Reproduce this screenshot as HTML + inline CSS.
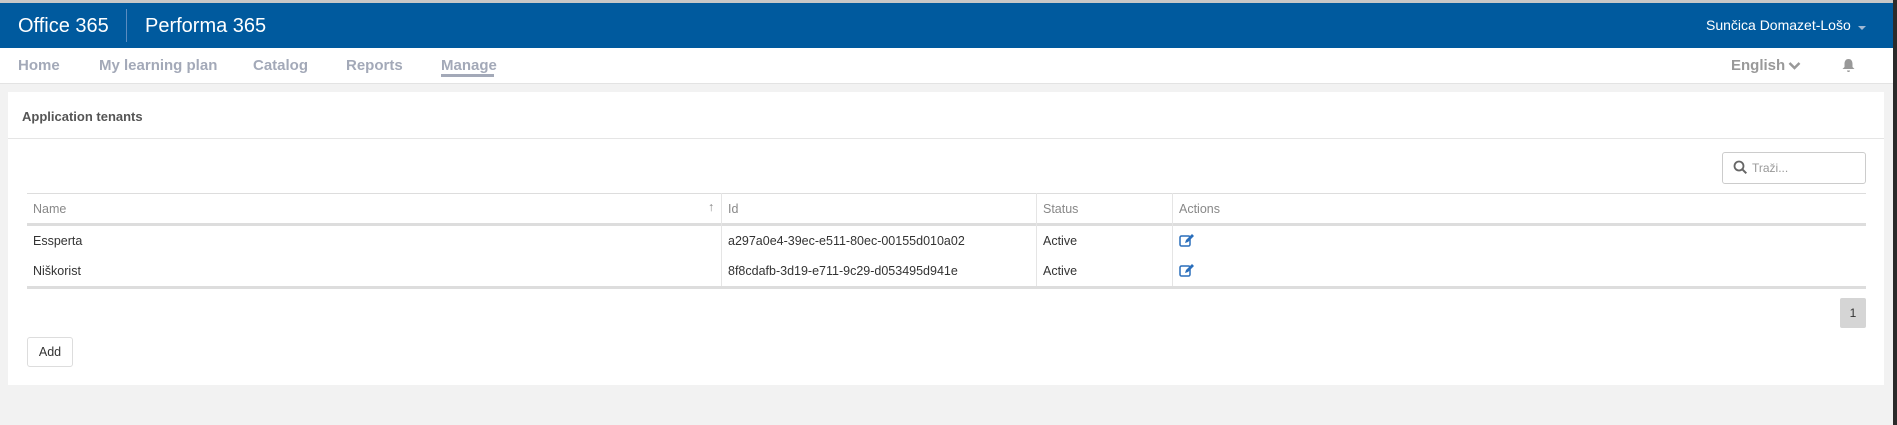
<!DOCTYPE html>
<html><head><meta charset="utf-8"><style>
*{margin:0;padding:0;box-sizing:border-box}
body{width:1897px;height:425px;background:#f2f2f2;font-family:"Liberation Sans",sans-serif;position:relative;overflow:hidden}
.abs{position:absolute}
#top{left:0;top:0;width:1897px;height:3px;background:#c8c8c8}
#hdr{left:0;top:3px;width:1893px;height:45px;background:#005a9e;color:#fff}
#nav{left:0;top:48px;width:1893px;height:36px;background:#fff;border-bottom:1px solid #e3e3e3}
.nv{top:57px;font-weight:bold;font-size:15px;color:#a3a9b8}
#sb{left:1893px;top:0;width:4px;height:425px;background:#2b2b2b}
#panel{left:8px;top:92px;width:1876px;height:293px;background:#fff}
.t{font-size:12.5px;color:#333}
.th{font-size:12.5px;color:#888}
.vl{width:1px;background:#e5e5e5}
</style></head><body>
<div id="top" class="abs"></div>
<div id="hdr" class="abs">
 <div class="abs" style="left:18px;top:12px;font-size:20px">Office 365</div>
 <div class="abs" style="left:126px;top:6px;width:1px;height:33px;background:#5a8cc0"></div>
 <div class="abs" style="left:145px;top:12px;font-size:20px">Performa 365</div>
 <div class="abs" style="left:1706px;top:14px;font-size:14px">Sunčica Domazet-Lošo</div>
 <div class="abs" style="left:1858px;top:23px;border-left:4px solid transparent;border-right:4px solid transparent;border-top:4px solid #9fb8d4"></div>
</div>
<div id="nav" class="abs"></div>
<div class="abs nv" style="left:18px">Home</div>
<div class="abs nv" style="left:99px">My learning plan</div>
<div class="abs nv" style="left:253px">Catalog</div>
<div class="abs nv" style="left:346px">Reports</div>
<div class="abs nv" style="left:441px">Manage</div>
<div class="abs" style="left:441px;top:74px;width:53px;height:3px;background:#a3a9b8"></div>
<div class="abs nv" style="left:1731px;color:#999">English</div>
<svg class="abs" style="left:1788px;top:61px" width="13" height="10"><path d="M1.5 2l5 5 5-5" stroke="#999" stroke-width="2.5" fill="none"/></svg>
<svg class="abs" style="left:1842px;top:58px" width="13" height="15"><path d="M6.5 1c-3 0-4 2.5-4 5v3l-2 2h12l-2-2v-3c0-2.5-1-5-4-5z M5 12.5a1.5 1.5 0 0 0 3 0z" fill="#999"/></svg>
<div id="sb" class="abs"></div>
<div id="panel" class="abs">
 <div class="abs" style="left:14px;top:17px;font-size:13px;font-weight:bold;color:#555">Application tenants</div>
 <div class="abs" style="left:0;top:46px;width:1876px;height:1px;background:#e5e5e5"></div>
 <div class="abs" style="left:1714px;top:60px;width:144px;height:32px;border:1px solid #ccc;border-radius:3px"></div>
 <svg class="abs" style="left:1725px;top:68px" width="15" height="15"><circle cx="6" cy="6" r="4.5" stroke="#666" stroke-width="1.8" fill="none"/><path d="M9.3 9.3l4 4" stroke="#666" stroke-width="2"/></svg>
 <div class="abs" style="left:1744px;top:69px;font-size:12px;color:#999">Traži...</div>
 <div class="abs" style="left:19px;top:101px;width:1839px;height:1px;background:#ddd"></div>
 <div class="abs" style="left:19px;top:131px;width:1839px;height:3px;background:#ddd"></div>
 <div class="abs" style="left:19px;top:194px;width:1839px;height:3px;background:#ddd"></div>
 <div class="abs vl" style="left:713px;top:101px;height:93px"></div>
 <div class="abs vl" style="left:1028px;top:101px;height:93px"></div>
 <div class="abs vl" style="left:1164px;top:101px;height:93px"></div>
 <div class="abs th" style="left:25px;top:110px">Name</div>
 <div class="abs th" style="left:700px;top:108px">↑</div>
 <div class="abs th" style="left:720px;top:110px">Id</div>
 <div class="abs th" style="left:1035px;top:110px">Status</div>
 <div class="abs th" style="left:1171px;top:110px">Actions</div>
 <div class="abs t" style="left:25px;top:142px">Essperta</div>
 <div class="abs t" style="left:720px;top:142px">a297a0e4-39ec-e511-80ec-00155d010a02</div>
 <div class="abs t" style="left:1035px;top:142px">Active</div>
 <div class="abs t" style="left:25px;top:172px">Niškorist</div>
 <div class="abs t" style="left:720px;top:172px">8f8cdafb-3d19-e711-9c29-d053495d941e</div>
 <div class="abs t" style="left:1035px;top:172px">Active</div>
 <svg class="abs" style="left:1171px;top:141px" width="16" height="15"><rect x="1" y="3" width="10" height="10" rx="1.5" stroke="#2a6ebb" stroke-width="1.5" fill="none"/><path d="M6 10l1-3 6-6 2 2-6 6z" fill="#2a6ebb"/></svg>
 <svg class="abs" style="left:1171px;top:171px" width="16" height="15"><rect x="1" y="3" width="10" height="10" rx="1.5" stroke="#2a6ebb" stroke-width="1.5" fill="none"/><path d="M6 10l1-3 6-6 2 2-6 6z" fill="#2a6ebb"/></svg>
 <div class="abs" style="left:1832px;top:206px;width:26px;height:30px;background:#d5d5d5;border-radius:2px;font-size:12px;color:#333;text-align:center;line-height:30px">1</div>
 <div class="abs" style="left:19px;top:245px;width:46px;height:30px;border:1px solid #ddd;border-radius:3px;font-size:12.5px;color:#333;text-align:center;line-height:28px">Add</div>
</div>
</body></html>
